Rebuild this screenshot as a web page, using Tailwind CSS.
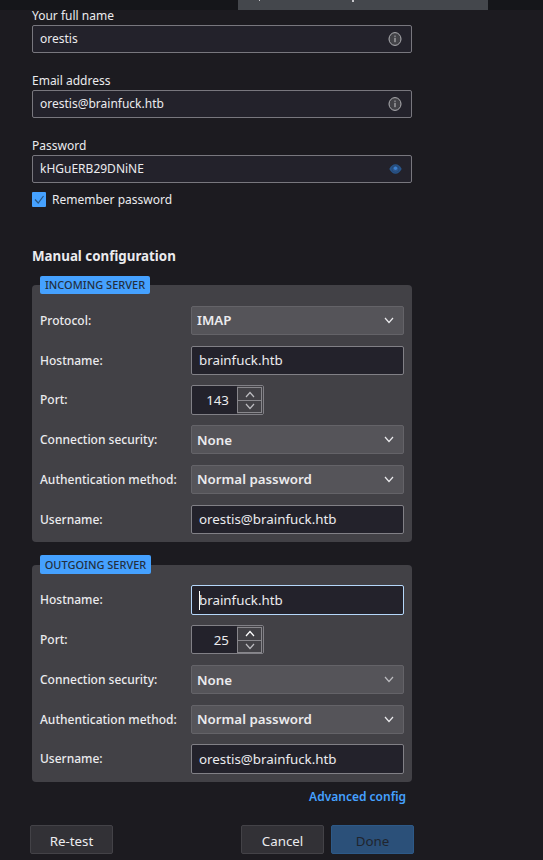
<!DOCTYPE html>
<html lang="en">
<head>
<meta charset="utf-8">
<title>Account Setup</title>
<script src="https://cdn.jsdelivr.net/npm/@tailwindcss/browser@4"></script>
</head>
<body class="h-[860px] w-[543px] overflow-hidden bg-[#1c1b20] font-['Noto_Sans',sans-serif] text-[#ebebee]">
<svg class="hidden">
  <symbol id="chev" viewBox="0 0 10 7"><path d="M1 1l4 4.5L9 1" fill="none" stroke="currentColor" stroke-width="1.2"/></symbol>
  <symbol id="info" viewBox="0 0 14 14"><ellipse cx="7" cy="7" rx="6" ry="6.4" fill="#424247" stroke="#b0b0b4" stroke-width="1"/><path d="M7 5.8v4.4M7 3.6v1.2" stroke="#c8c8cc" stroke-width="1"/></symbol>
</svg>
<header class="flex h-[10px] bg-[#15161a] pl-[238px]">
  <div class="flex h-[10px] w-[250px] bg-[#44474c]">
    <span class="ml-[21px] h-px w-px bg-[#c8c8cc]"></span><span class="ml-[92px] h-[2px] w-[2px] bg-[#c8c8cc]"></span>
  </div>
</header>
<main>
  <section class="ml-8 w-[380px] text-[12px]">
    <div class="h-[15px] leading-[12px]">Your full name</div>
    <div class="flex h-7 items-center justify-between rounded-[2px] border border-[#78777e] bg-[#23222b] pr-[9px] pl-[7px]"><span>orestis</span><svg class="h-[14px] w-[14px]"><use href="#info"/></svg></div>
    <div class="mt-[22px] h-[15px] leading-[12px]">Email address</div>
    <div class="flex h-7 items-center justify-between rounded-[2px] border border-[#78777e] bg-[#23222b] pr-[9px] pl-[7px]"><span>orestis@brainfuck.htb</span><svg class="h-[14px] w-[14px]"><use href="#info"/></svg></div>
    <div class="mt-[22px] h-[15px] leading-[12px]">Password</div>
    <div class="flex h-7 items-center justify-between rounded-[2px] border border-[#78777e] bg-[#23222b] pr-[9px] pl-[7px]"><span>kHGuERB29DNiNE</span>
      <svg class="h-[10px] w-[13px]" viewBox="0 0 13 10"><path d="M.3 5C2 1.800 4 .3 6.500 .3S11 1.800 12.700 5C11 8.200 9 9.700 6.500 9.700S2 8.200 .3 5z" fill="#28558a"/><ellipse cx="6.500" cy="5" rx="3.600" ry="3.300" fill="#2d568b" stroke="#244570" stroke-width=".7"/><circle cx="6.500" cy="4.300" r="1.700" fill="#3c80d0"/></svg></div>
    <div class="mt-[9px] flex h-[15px] items-center">
      <svg class="h-[15px] w-[14px]" viewBox="0 0 14 15"><rect width="14" height="15" rx="1" fill="#45a1ff"/><path d="M3 7.500l3.200 3.500L11.500 4" fill="none" stroke="#265583" stroke-width="1.200"/></svg>
      <span class="ml-[6px]">Remember password</span>
    </div>
    <h1 class="mt-[39px] h-[20px] text-[13.330px] leading-[20px] font-bold">Manual configuration</h1>
  </section>

  <section class="mt-[10px] ml-8 w-[380px]">
    <h2 class="relative z-10 ml-2 h-[18px] w-[110px] rounded-[2px] bg-[#45a1ff] text-center text-[11px] leading-[18px] font-medium text-[#23303f]">INCOMING SERVER</h2>
    <div class="-mt-[9px] h-[257px] rounded-[4px] bg-[#424146] px-2 pt-[21px] text-[13.330px]">
      <div class="flex h-10 items-start"><span class="w-[151px] text-[12px] leading-[29px] font-medium whitespace-nowrap">Protocol:</span><div class="flex h-[29px] w-[213px] items-center justify-between rounded-[2px] border border-[#646368] bg-[#555459] pr-[9px] pl-[5px] font-semibold"><span>IMAP</span><svg class="h-[7px] w-[10px]"><use href="#chev"/></svg></div></div>
      <div class="flex h-[39px] items-start"><span class="w-[151px] text-[12px] leading-[29px] font-medium whitespace-nowrap">Hostname:</span><div class="flex h-[29px] w-[213px] items-center rounded-[2px] border border-[#818086] bg-[#23222b] pl-[7px]">brainfuck.htb</div></div>
      <div class="flex h-10 items-start"><span class="w-[151px] text-[12px] leading-[29px] font-medium whitespace-nowrap">Port:</span><div class="flex h-[30px] w-[73px] items-center rounded-[2px] border border-[#818086] bg-[#23222b]"><span class="w-[37px] pt-[2px] text-right">143</span><div class="ml-2 flex h-[28px] flex-1 items-center bg-[#424146] pr-px text-[#bcbcc0]"><div class="flex h-[26px] w-[25px] flex-col border border-[#88878c]"><span class="flex h-[12px] items-center justify-center"><svg class="h-[7px] w-[10px] rotate-180"><use href="#chev"/></svg></span><span class="flex h-[12px] items-center justify-center border-t border-[#88878c]"><svg class="h-[7px] w-[10px]"><use href="#chev"/></svg></span></div></div></div></div>
      <div class="flex h-10 items-start"><span class="w-[151px] text-[12px] leading-[29px] font-medium whitespace-nowrap">Connection security:</span><div class="flex h-[29px] w-[213px] items-center justify-between rounded-[2px] border border-[#646368] bg-[#555459] pr-[9px] pl-[5px] font-semibold"><span class="pt-[2px]">None</span><svg class="h-[7px] w-[10px]"><use href="#chev"/></svg></div></div>
      <div class="flex h-10 items-start"><span class="w-[151px] text-[12px] leading-[29px] font-medium whitespace-nowrap">Authentication method:</span><div class="flex h-[29px] w-[213px] items-center justify-between rounded-[2px] border border-[#646368] bg-[#555459] pr-[9px] pl-[5px] font-semibold"><span>Normal password</span><svg class="h-[7px] w-[10px]"><use href="#chev"/></svg></div></div>
      <div class="flex items-start"><span class="w-[151px] text-[12px] leading-[29px] font-medium whitespace-nowrap">Username:</span><div class="flex h-[29px] w-[213px] items-center rounded-[2px] border border-[#818086] bg-[#23222b] pl-[7px]">orestis@brainfuck.htb</div></div>
    </div>
  </section>

  <section class="mt-[13px] ml-8 w-[380px]">
    <h2 class="relative z-10 ml-2 h-[19px] w-[111px] rounded-[2px] bg-[#45a1ff] text-center text-[11px] leading-[19px] font-medium text-[#23303f]">OUTGOING SERVER</h2>
    <div class="-mt-[9px] h-[217px] rounded-[4px] bg-[#424146] px-2 pt-[20px] text-[13.330px]">
      <div class="flex h-10 items-start"><span class="w-[151px] text-[12px] leading-[29px] font-medium whitespace-nowrap">Hostname:</span><div class="flex h-[30px] w-[213px] items-center rounded-[2px] border border-[#b5d7fa] bg-[#23222b] pl-[7px]"><span class="-mr-px h-[19px] w-px bg-white"></span><span class="pt-px">brainfuck.htb</span></div></div>
      <div class="flex h-10 items-start"><span class="w-[151px] text-[12px] leading-[29px] font-medium whitespace-nowrap">Port:</span><div class="flex h-[29px] w-[73px] items-center rounded-[2px] border border-[#818086] bg-[#23222b]"><span class="w-[37px] pt-[3px] text-right">25</span><div class="ml-2 flex h-[27px] flex-1 items-center bg-[#424146] pr-px text-[#bcbcc0]"><div class="flex h-[26px] w-[25px] flex-col border border-[#88878c]"><span class="flex h-[12px] items-center justify-center text-white"><svg class="h-[7px] w-[10px] rotate-180"><use href="#chev"/></svg></span><span class="flex h-[12px] items-center justify-center border-t border-[#88878c]"><svg class="h-[7px] w-[10px]"><use href="#chev"/></svg></span></div></div></div></div>
      <div class="flex h-10 items-start"><span class="w-[151px] text-[12px] leading-[29px] font-medium whitespace-nowrap">Connection security:</span><div class="flex h-[29px] w-[213px] items-center justify-between rounded-[2px] border border-[#646368] bg-[#555459] pr-[9px] pl-[5px] font-semibold"><span class="pt-[2px]">None</span><svg class="h-[7px] w-[10px] text-[#bcbcc0]"><use href="#chev"/></svg></div></div>
      <div class="flex h-[39px] items-start"><span class="w-[151px] text-[12px] leading-[29px] font-medium whitespace-nowrap">Authentication method:</span><div class="flex h-[29px] w-[213px] items-center justify-between rounded-[2px] border border-[#646368] bg-[#555459] pr-[9px] pl-[5px] font-semibold"><span>Normal password</span><svg class="h-[7px] w-[10px]"><use href="#chev"/></svg></div></div>
      <div class="flex items-start"><span class="w-[151px] text-[12px] leading-[29px] font-medium whitespace-nowrap">Username:</span><div class="flex h-[30px] w-[213px] items-center rounded-[2px] border border-[#818086] bg-[#23222b] pt-px pl-[7px]">orestis@brainfuck.htb</div></div>
    </div>
    <div class="mt-[5px] h-5 pr-[6px] text-right text-[12px] leading-5 font-semibold text-[#45a1ff]">Advanced config</div>
  </section>

  <footer class="mt-[18px] ml-[30px] flex h-[29px] text-[13.330px] leading-[30px]">
    <div class="w-[83px] rounded-[2px] border border-[#434247] bg-[#323136] text-center">Re-test</div>
    <div class="ml-[128px] w-[83px] rounded-[2px] border border-[#434247] bg-[#323136] text-center">Cancel</div>
    <div class="ml-[7px] w-[83px] rounded-[2px] border border-[#2d5987] bg-[#2b5079] text-center text-[#20252e]">Done</div>
  </footer>
</main>
</body>
</html>
